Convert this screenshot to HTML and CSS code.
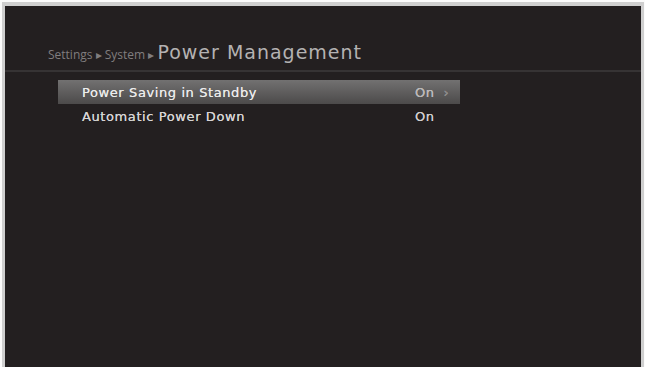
FILE: index.html
```html
<!DOCTYPE html>
<html lang="en">
  <head>
    <meta charset="UTF-8" />
    <meta name="viewport" content="width=device-width, initial-scale=1.0" />
    <title>Power Management</title>
    <link rel="stylesheet" href="styles.css">
  </head>
  <body>
    <div class="screen">
      <div class="header">
        <span class="crumb">Settings &#9656; System &#9656;</span>
        <span class="title">Power Management</span>
      </div>

      <div class="menu">
        <div class="row selected">
          <span class="label">Power Saving in Standby</span>
          <span class="value">On <span class="arrow">&#8250;</span></span>
        </div>
        <div class="row">
          <span class="label">Automatic Power Down</span>
          <span class="value">On</span>
        </div>
      </div>
    </div>
  </body>
</html>
```

FILE: styles.css
```css
html,
body {
  height: 100%;
}

body {
  margin: 0;
  padding: 2px 1px 0 2px;
  box-sizing: border-box;
  background-color: #fbfbfb;
  font-family: "DejaVu Sans", sans-serif;
}

.screen {
  height: 100%;
  box-sizing: border-box;
  background-color: #231f20;
  border: 3px solid #cfcfcf;
  border-top-width: 4px;
  border-bottom: none;
}

.header {
  height: 66px;
  box-sizing: border-box;
  padding: 35px 0 0 43px;
  border-bottom: 2px solid #363334;
  white-space: nowrap;
}

.crumb {
  font-family: "Open Sans", sans-serif;
  font-size: 12px;
  color: #807d7e;
}

.title {
  font-size: 19px;
  color: #b4b2b2;
  letter-spacing: 1px;
  margin-left: -2px;
}

.menu {
  padding: 8px 0 0 53px;
  width: 402px;
}

.row {
  display: grid;
  grid-template-columns: 1fr 45px;
  align-items: center;
  height: 24px;
  padding-left: 24px;
  font-size: 13px;
  color: #d6d4d4;
  letter-spacing: 0.6px;
  text-shadow: 0 0 0.6px #d6d4d4;
}

.row.selected {
  background: linear-gradient(#727171, #4c4a4a);
  color: #ececec;
}

.value {
  color: #d0cece;
}

.selected .value {
  color: #b9b7b7;
}

.arrow {
  margin-left: 4px;
  color: #7d7b7b;
}
```
